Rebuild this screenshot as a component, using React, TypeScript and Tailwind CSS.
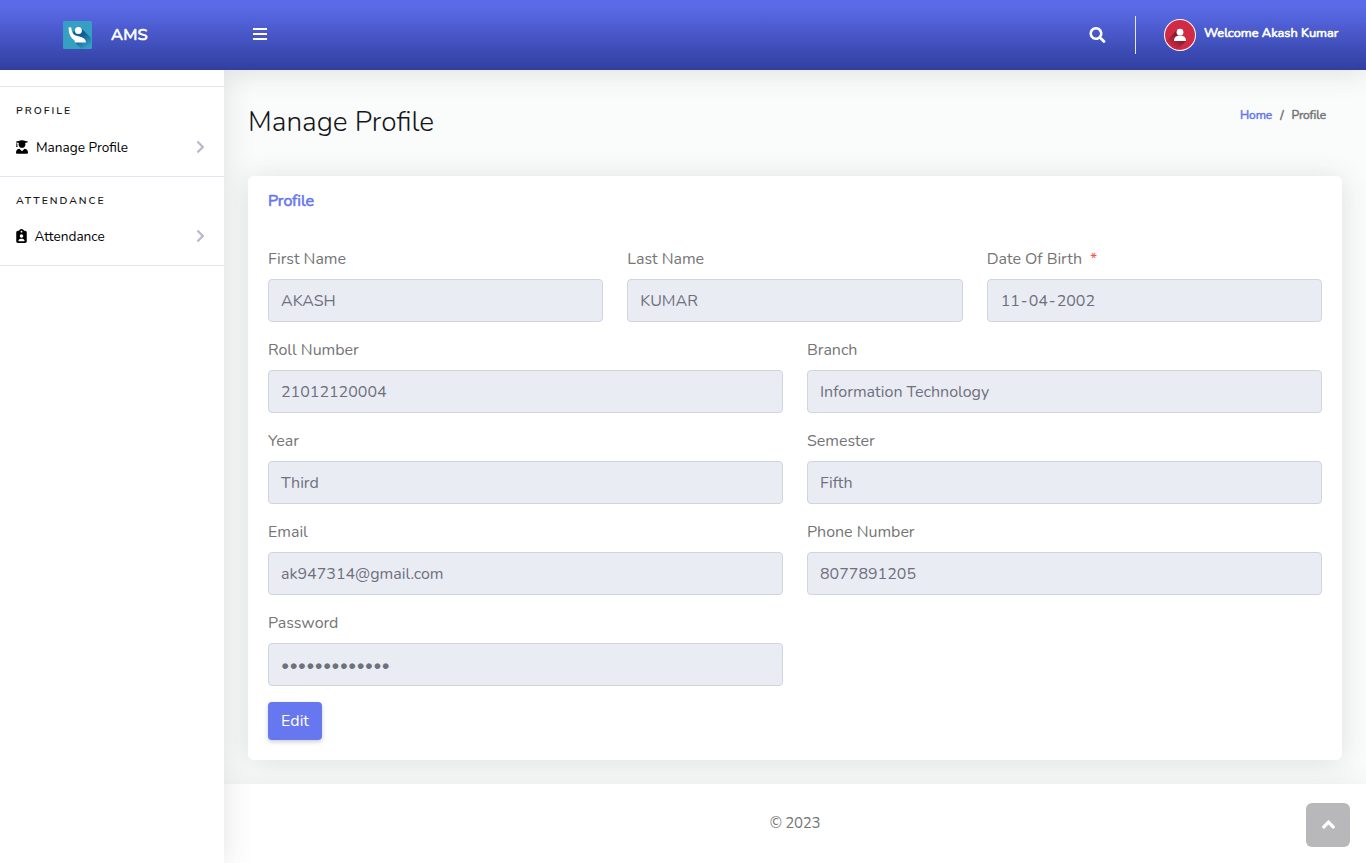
import type { ReactNode } from "react";
import { FaUserGraduate, FaSearch, FaAngleUp, FaChevronRight } from "react-icons/fa";
import { FaClipboardUser } from "react-icons/fa6";

function Logo() {
  return (
    <svg viewBox="0 0 29 28" className="h-7 w-[29px] shrink-0">
      <defs>
        <linearGradient id="logo-shade" gradientUnits="userSpaceOnUse" x1="15" y1="12" x2="25" y2="26">
          <stop offset="0.25" stopColor="#0f5f93" />
          <stop offset="1" stopColor="#359fc4" />
        </linearGradient>
      </defs>
      <rect width="29" height="28" rx="1.5" fill="#359fc4" />
      <path d="M18 7 L28 17 V25 L25.5 27.5 H18 L11.5 21 L10 11 Z" fill="url(#logo-shade)" />
      <circle cx="15.4" cy="9.6" r="3.5" fill="#fff" />
      <path
        d="M5.6 6.2 L8.3 6.6 C8.6 10.5 9.4 13 12 14.2 C15.5 15.2 19 16 21 17.6 C22.4 18.8 22.9 20.2 23 21.6 L11.8 21.6 C11.8 20.4 11.6 19.6 11 18.9 C7.4 16.4 5.6 12.6 5.6 6.2 Z"
        fill="#fff"
      />
    </svg>
  );
}

function Avatar() {
  return (
    <svg viewBox="0 0 32 32" className="h-8 w-8 shrink-0">
      <defs>
        <clipPath id="avatar-clip">
          <circle cx="16" cy="16" r="15" />
        </clipPath>
        <linearGradient id="avatar-shade" gradientUnits="userSpaceOnUse" x1="15" y1="17" x2="7" y2="26">
          <stop offset="0" stopColor="#7f1a2d" />
          <stop offset="1" stopColor="#c9283f" />
        </linearGradient>
      </defs>
      <circle cx="16" cy="16" r="16" fill="#fff" />
      <g clipPath="url(#avatar-clip)">
        <rect width="32" height="32" fill="#d12a45" />
        <path d="M13 11 L2 22 L12 32 L22 22 Z" fill="url(#avatar-shade)" />
      </g>
      <circle cx="16" cy="13.2" r="3.4" fill="#fff" />
      <path d="M10 22 C10 18.6 11.6 17 14 16.8 H18 C20.4 17 22 18.6 22 22 Z" fill="#fff" />
    </svg>
  );
}

function SidebarSection({ title, icon, label, itemClass }: { title: string; icon: ReactNode; label: string; itemClass: string }) {
  return (
    <section className="border-t border-[#e3e6f0]">
      <h2 className="px-4 pt-4 text-[10.4px] leading-4 font-semibold tracking-[2px] text-[#15161a]">{title}</h2>
      <a className={`flex items-center px-4 text-[13.6px] font-[370] text-black ${itemClass}`}>
        {icon}
        {label}
        <FaChevronRight className="mr-[2px] mb-0.5 ml-auto h-[14px] w-[11px] text-[#b7b9cc]" />
      </a>
    </section>
  );
}

function Field({ label, value, className, required }: { label: string; value: ReactNode; className: string; required?: boolean }) {
  return (
    <div className={className}>
      <div className="mb-2 h-6 text-[16px] leading-6 font-[370] tracking-[-0.03px] text-[#757575]">
        {label}
        {required && <span className="ml-2 text-[#fc544b]">*</span>}
      </div>
      <div className="flex h-[43px] items-center rounded-[4px] border border-[#d1d3e2] bg-[#eaecf4] px-3 text-[16px] font-[380] text-[#6e707e]">
        {value}
      </div>
    </div>
  );
}

export default function App() {
  return (
    <div className="flex h-[863px] w-[1366px] overflow-hidden bg-white font-['Nunito','Lato',sans-serif] text-[#757575]">
      <aside className="relative z-10 flex w-56 shrink-0 flex-col bg-white shadow-[0_2px_28px_0_rgba(58,59,69,0.15)]">
        <div className="flex h-[70px] shrink-0 items-center bg-linear-to-b from-[#5b6be8] from-10% to-[#303f9f] pl-[63px]">
          <Logo />
          <span className="ml-[19px] pt-px text-[16.5px] tracking-[0.2px] text-white [-webkit-text-stroke:0.7px]">AMS</span>
        </div>
        <nav className="mt-4">
          <SidebarSection
            title="PROFILE"
            itemClass="h-[57px] pt-px"
            icon={<FaUserGraduate className="mr-2 mb-0.5 h-[14px] w-3" />}
            label="Manage Profile"
          />
          <SidebarSection
            title="ATTENDANCE"
            itemClass="h-[56px]"
            icon={<FaClipboardUser className="mr-[7.5px] mb-0.5 h-[14px] w-[11px]" />}
            label="Attendance"
          />
          <div className="border-t border-[#e3e6f0]" />
        </nav>
      </aside>

      <div className="flex min-w-0 flex-1 flex-col bg-[#fafcfb]">
        <header className="relative z-20 flex h-[70px] shrink-0 items-center bg-linear-to-b from-[#5b6be8] from-10% to-[#303f9f] pr-7 pl-[29px] text-white shadow-[0_2px_28px_0_rgba(58,59,69,0.15)] [clip-path:inset(0_0_-50px_0)]">
          <div className="mb-0.5 flex w-[14px] flex-col gap-[3px]">
            <i className="h-[2px] bg-white" />
            <i className="h-[2px] bg-white" />
            <i className="h-[2px] bg-white" />
          </div>
          <FaSearch className="ml-auto h-4 w-[17px]" />
          <div className="ml-[29px] h-[38px] w-px bg-[#e3e6f0]" />
          <div className="ml-7">
            <Avatar />
          </div>
          <span className="ml-2 w-[134px] pb-0.5 text-[12.8px] whitespace-nowrap [-webkit-text-stroke:0.6px]">Welcome Akash Kumar</span>
        </header>

        <main className="flex flex-1 flex-col px-6">
          <div className="flex h-[106px] justify-between">
            <h1 className="pt-[35px] text-[28px] leading-[34px] font-[350] text-[#15161a]">Manage Profile</h1>
            <div className="flex pt-[35px] pr-4 text-[12px] leading-5 tracking-[-0.07px] [-webkit-text-stroke:0.5px]">
              <span className="text-[#6777ef]">Home</span>
              <span className="px-2">/</span>
              <span>Profile</span>
            </div>
          </div>

          <section className="h-[584px] rounded-[6px] bg-white px-5 shadow-[0_2px_28px_0_rgba(58,59,69,0.15)]">
            <h2 className="h-[71px] pt-4 text-[16px] leading-[19px] tracking-[-0.1px] text-[#6777ef] [-webkit-text-stroke:0.6px]">Profile</h2>
            <div className="grid grid-cols-6 gap-x-6 gap-y-4">
              <Field className="col-span-2" label="First Name" value="AKASH" />
              <Field className="col-span-2" label="Last Name" value="KUMAR" />
              <Field
                className="col-span-2"
                label="Date Of Birth"
                value={
                  <span className="flex pl-px">
                    11<span className="px-px">-</span>04<span className="px-px">-</span>2002
                  </span>
                }
                required
              />
              <Field className="col-span-3" label="Roll Number" value="21012120004" />
              <Field className="col-span-3" label="Branch" value="Information Technology" />
              <Field className="col-span-3" label="Year" value="Third" />
              <Field className="col-span-3" label="Semester" value="Fifth" />
              <Field className="col-span-3" label="Email" value="ak947314@gmail.com" />
              <Field className="col-span-3" label="Phone Number" value="8077891205" />
              <Field className="col-span-3" label="Password" value="•••••••••••••" />
            </div>
            <button className="mt-4 h-[38px] w-[54px] rounded-[4px] bg-[#6777ef] text-[16px] text-white shadow-[0_2px_4px_rgba(58,59,69,0.25)]">
              Edit
            </button>
          </section>
        </main>

        <footer className="relative flex h-[79px] shrink-0 items-center justify-center bg-white text-[15px] shadow-[0_2px_28px_0_rgba(58,59,69,0.1)]">
          <span className="font-[370] tracking-[-0.25px]">© 2023</span>
          <a className="absolute right-4 bottom-4 flex h-11 w-11 items-center justify-center rounded-[6px] bg-[#b8b8ba] text-white">
            <FaAngleUp className="mb-0.5 h-[21px] w-[21px]" />
          </a>
        </footer>
      </div>
    </div>
  );
}
